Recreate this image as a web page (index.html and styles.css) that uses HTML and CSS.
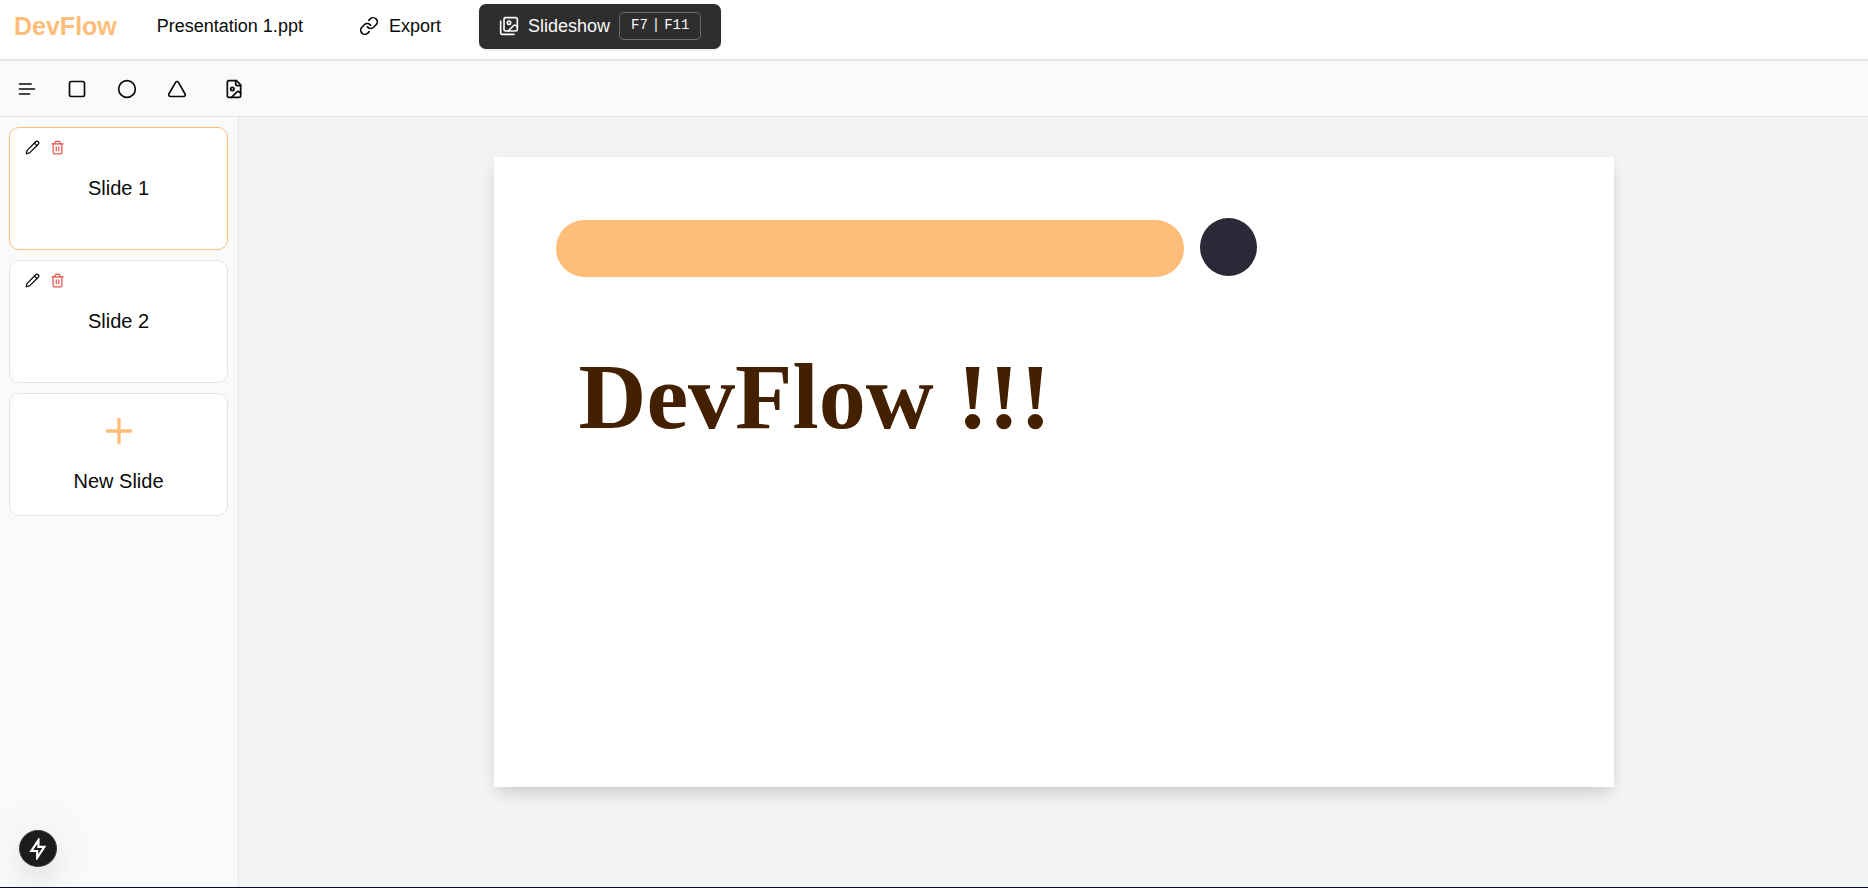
FILE: index.html
```html
<!DOCTYPE html>
<html lang="en">
<head>
<meta charset="utf-8">
<title>DevFlow</title>
<link rel="stylesheet" href="styles.css">
</head>
<body>
<svg class="sprite" aria-hidden="true">
  <symbol id="pencil" viewBox="0 0 24 24"><path d="M21.174 6.812a1 1 0 0 0-3.986-3.987L3.842 16.174a2 2 0 0 0-.5.83l-1.321 4.352a.5.5 0 0 0 .623.622l4.353-1.32a2 2 0 0 0 .83-.497z"/><path d="m15 5 4 4"/></symbol>
  <symbol id="trash" viewBox="0 0 24 24"><path d="M3 6h18"/><path d="M19 6v14c0 1-1 2-2 2H7c-1 0-2-1-2-2V6"/><path d="M8 6V4c0-1 1-2 2-2h4c1 0 2 1 2 2v2"/><path d="M10 11v6"/><path d="M14 11v6"/></symbol>
</svg>
<header class="header">
  <h1 class="brand">DevFlow</h1>
  <span class="filename">Presentation 1.ppt</span>
  <button class="export" type="button">
    <svg class="icon" viewBox="0 0 24 24" aria-hidden="true"><path d="M10 13a5 5 0 0 0 7.54.54l3-3a5 5 0 0 0-7.07-7.07l-1.72 1.71"/><path d="M14 11a5 5 0 0 0-7.54-.54l-3 3a5 5 0 0 0 7.07 7.07l1.71-1.71"/></svg>
    Export
  </button>
  <button class="slideshow" type="button">
    <svg class="icon" viewBox="0 0 24 24" aria-hidden="true"><path d="M18 22H4a2 2 0 0 1-2-2V6"/><path d="m22 13-1.296-1.296a2.41 2.41 0 0 0-3.408 0L11 18"/><circle cx="12" cy="8" r="2"/><rect width="16" height="16" x="6" y="2" rx="2"/></svg>
    Slideshow
    <span class="keys"><kbd>F7</kbd><span>|</span><kbd>F11</kbd></span>
  </button>
</header>
<div class="toolbar" role="toolbar" aria-label="Insert">
  <button class="tool" type="button" aria-label="Text"><svg class="icon" viewBox="0 0 24 24"><path d="M17 6H3"/><path d="M21 12H3"/><path d="M15 18H3"/></svg></button>
  <button class="tool" type="button" aria-label="Rectangle"><svg class="icon" viewBox="0 0 24 24"><rect width="18" height="18" x="3" y="3" rx="2"/></svg></button>
  <button class="tool" type="button" aria-label="Circle"><svg class="icon" viewBox="0 0 24 24"><circle cx="12" cy="12" r="10"/></svg></button>
  <button class="tool" type="button" aria-label="Triangle"><svg class="icon" viewBox="0 0 24 24"><path d="M13.73 4a2 2 0 0 0-3.46 0l-8 14A2 2 0 0 0 4 21h16a2 2 0 0 0 1.73-3Z"/></svg></button>
  <button class="tool tool-image" type="button" aria-label="Image"><svg class="icon" viewBox="0 0 24 24"><path d="M15 2H6a2 2 0 0 0-2 2v16a2 2 0 0 0 2 2h12a2 2 0 0 0 2-2V7Z"/><path d="M14 2v4a2 2 0 0 0 2 2h4"/><circle cx="10" cy="12" r="2"/><path d="m20 17-1.296-1.296a2.41 2.41 0 0 0-3.408 0L9 22"/></svg></button>
</div>
<div class="workspace">
  <aside class="sidebar">
    <article class="card card-active">
      <div class="actions">
        <button class="action" type="button" aria-label="Rename slide 1"><svg class="icon-small"><use href="#pencil"/></svg></button>
        <button class="action action-delete" type="button" aria-label="Delete slide 1"><svg class="icon-small"><use href="#trash"/></svg></button>
      </div>
      <span>Slide 1</span>
    </article>
    <article class="card">
      <div class="actions">
        <button class="action" type="button" aria-label="Rename slide 2"><svg class="icon-small"><use href="#pencil"/></svg></button>
        <button class="action action-delete" type="button" aria-label="Delete slide 2"><svg class="icon-small"><use href="#trash"/></svg></button>
      </div>
      <span>Slide 2</span>
    </article>
    <button class="card card-new" type="button">
      <svg class="plus" viewBox="0 0 24 24" aria-hidden="true"><path d="M5 12h14"/><path d="M12 5v14"/></svg>
      New Slide
    </button>
  </aside>
  <main class="stage">
    <section class="slide" aria-label="Slide 1">
      <div class="shape-bar"></div>
      <div class="shape-circle"></div>
      <p class="slide-title">DevFlow !!!</p>
    </section>
  </main>
</div>
<button class="quick" type="button" aria-label="Developer tools"><svg class="bolt" viewBox="0 0 20 20"><path d="M10.4 2 4 11.8h5.2V18L15.8 8h-5.4Z"/></svg></button>
</body>
</html>
```

FILE: styles.css
```css
* { box-sizing: border-box; }

body {
  margin: 0;
  min-height: 100vh;
  display: flex;
  flex-direction: column;
  border-bottom: 1px solid #020b2b;
  font: 18px/24px "Liberation Sans", Arial, sans-serif;
  color: #0a0a0a;
}

button {
  padding: 0;
  border: 0;
  background: none;
  color: inherit;
  font: inherit;
  cursor: pointer;
}

svg {
  display: block;
  flex: none;
  fill: none;
  stroke: currentColor;
  stroke-width: 2;
  stroke-linecap: round;
  stroke-linejoin: round;
}

.sprite { position: absolute; width: 0; height: 0; }
.icon { width: 20px; height: 20px; }
.icon-small { width: 15px; height: 15px; }

.header {
  display: flex;
  align-items: center;
  padding: 4px 14px 10px;
  border-bottom: 2px solid #e5e5e5;
}

.brand {
  margin: 0 40px 0 0;
  padding-bottom: 2px;
  font-size: 25px;
  line-height: 32px;
  color: #ffbd7a;
}

.filename {
  margin-right: 56px;
  padding-bottom: 2px;
}

.export {
  display: flex;
  align-items: center;
  gap: 10px;
  margin-right: 38px;
  padding-bottom: 1px;
}

.slideshow {
  display: flex;
  align-items: center;
  gap: 9px;
  height: 45px;
  padding: 0 20px 1px;
  border-radius: 7px;
  background: #2e2e2e;
  color: #fafafa;
  box-shadow: 0 1px 3px rgb(0 0 0 / 12%);
}

.keys {
  display: flex;
  gap: 4px;
  padding: 0 11px 2px;
  border: 1px solid #6c6c6c;
  border-radius: 5px;
  font: 14px/24px "Liberation Mono", "Courier New", monospace;
}

.keys kbd { font: inherit; }

.toolbar {
  display: flex;
  align-items: center;
  gap: 30px;
  padding: 18px 17px 17px;
  border-bottom: 1px solid #e5e5e5;
  background: #f9fafb;
}

.tool-image { margin-left: 7px; }

.workspace { flex: 1; display: flex; }

.sidebar {
  display: flex;
  flex-direction: column;
  gap: 10px;
  width: 239px;
  padding: 10px 10px 10px 9px;
  border-right: 1px solid #e5e5e5;
  background: #f9fafb;
}

.card {
  position: relative;
  display: flex;
  flex-direction: column;
  align-items: center;
  justify-content: center;
  height: 123px;
  padding-bottom: 2px;
  border: 1px solid #e5e5e5;
  border-radius: 10px;
  background: #fff;
  font-size: 20px;
}

.card-active { border-color: #ffbd7a; }

.card-new {
  gap: 18px;
  padding-bottom: 5px;
}

.actions {
  position: absolute;
  top: 12px;
  left: 15px;
  display: flex;
  gap: 10px;
}

.action-delete { color: #e7554d; }
.plus { width: 40px; height: 40px; color: #ffbd7a; }

.stage {
  flex: 1;
  padding: 40px;
  background: #f3f4f6;
}

.slide {
  position: relative;
  max-width: 1120px;
  aspect-ratio: 16 / 9;
  margin: 0 auto;
  background: #fff;
  box-shadow: 0 10px 15px -3px rgb(0 0 0 / 10%), 0 4px 20px -4px rgb(0 0 0 / 10%);
}

.shape-bar {
  position: absolute;
  top: 63px;
  left: 62px;
  width: 628px;
  height: 57px;
  border-radius: 29px;
  background: #ffbd7a;
}

.shape-circle {
  position: absolute;
  top: 61px;
  left: 706px;
  width: 57px;
  height: 58px;
  border-radius: 50%;
  background: #2a2937;
}

.slide-title {
  position: absolute;
  top: 185px;
  left: 85px;
  margin: 0;
  font: bold 94px/108px "Liberation Serif", "Times New Roman", serif;
  color: #432100;
  white-space: nowrap;
}

.quick {
  position: fixed;
  bottom: 21px;
  left: 19px;
  display: grid;
  place-items: center;
  width: 38px;
  height: 37px;
  border: 1px solid #3a3a3c;
  border-radius: 50%;
  background: #1c1c1e;
  color: #fff;
  box-shadow: 0 16px 32px -8px rgb(0 0 0 / 24%), 0 0 50px rgb(0 0 0 / 10%);
}

.bolt { width: 22px; height: 22px; stroke-width: 2; stroke-linejoin: miter; }
```
